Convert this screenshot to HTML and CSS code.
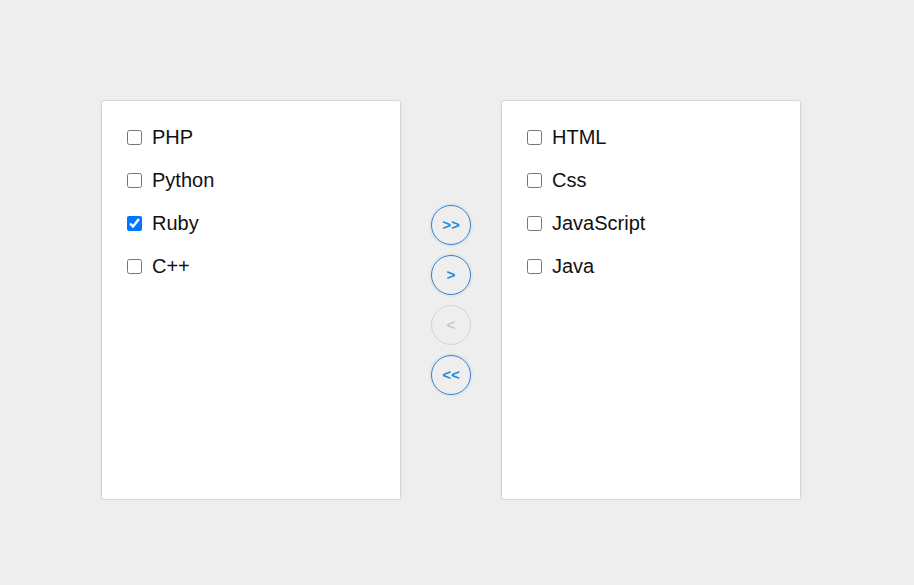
FILE: index.html
```html
<!DOCTYPE html>
<html>
<head>
<meta charset="utf-8">
<link rel="stylesheet" href="styles.css">
</head>
<body>
<div class="transfer">
  <div class="panel">
    <label class="item"><input type="checkbox"><span>PHP</span></label>
    <label class="item"><input type="checkbox"><span>Python</span></label>
    <label class="item"><input type="checkbox" checked><span>Ruby</span></label>
    <label class="item"><input type="checkbox"><span>C++</span></label>
  </div>
  <div class="actions">
    <button class="btn">&gt;&gt;</button>
    <button class="btn">&gt;</button>
    <button class="btn" disabled>&lt;</button>
    <button class="btn">&lt;&lt;</button>
  </div>
  <div class="panel">
    <label class="item"><input type="checkbox"><span>HTML</span></label>
    <label class="item"><input type="checkbox"><span>Css</span></label>
    <label class="item"><input type="checkbox"><span>JavaScript</span></label>
    <label class="item"><input type="checkbox"><span>Java</span></label>
  </div>
</div>
</body>
</html>
```
FILE: styles.css
```css
html, body {
  margin: 0;
  background: #eeeeee;
  font-family: "Liberation Sans", Arial, sans-serif;
}
.transfer {
  display: flex;
  align-items: center;
  gap: 30px;
  padding: 100px 0 0 101px;
}
.panel {
  box-sizing: border-box;
  width: 300px;
  height: 400px;
  background: #fff;
  border: 1px solid #d6d6d6;
  border-radius: 3px;
  box-shadow: 0 1px 3px rgba(0,0,0,0.08);
  padding: 25px 25px;
  display: flex;
  flex-direction: column;
  gap: 20px;
}
.item {
  display: flex;
  align-items: center;
  height: 23px;
  font-size: 20px;
  color: #111;
}
.item input {
  margin: 0 10px 0 0;
  width: 15px;
  height: 15px;
}
.actions {
  display: flex;
  flex-direction: column;
  gap: 10px;
}
.btn {
  width: 40px;
  height: 40px;
  border-radius: 50%;
  border: 1px solid #3580c8;
  background: transparent;
  color: #2a88d8;
  font-family: "Liberation Sans", Arial, sans-serif;
  font-weight: bold;
  font-size: 15px;
  padding: 0 0 2px 0;
  box-shadow: 0 0 0 2px rgba(44,138,214,0.07);
}
.btn:disabled {
  border-color: #d4d4d4;
  color: #c8c8c8;
  box-shadow: none;
}
```
